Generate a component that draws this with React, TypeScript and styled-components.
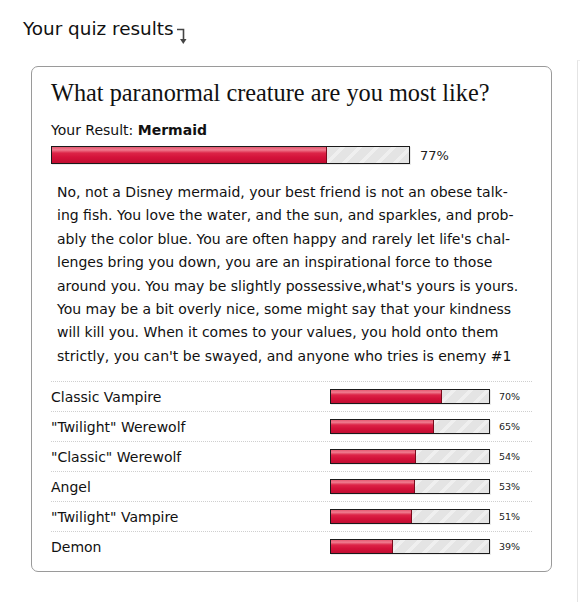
import React from "react";
import styled, { createGlobalStyle } from "styled-components";

const Global = createGlobalStyle`
  html, body { margin: 0; padding: 0; background: #fff; overflow: hidden; }
  body { font-family: "DejaVu Sans", Verdana, sans-serif; color: #111; }
`;

const Page = styled.div`
  display: flex;
  width: 580px;
  height: 602px;
  overflow: hidden;
`;

const MainColumn = styled.div`
  flex: 0 0 552px;
  display: flex;
  flex-direction: column;
`;

const SideColumn = styled.div`
  flex: 0 0 40px;
  margin-left: 25px;
  margin-top: 60px;
  border-left: 1px solid #e4e4e4;
  border-top: 1px solid #eee;
`;

const Header = styled.div`
  display: flex;
  align-items: flex-start;
  padding: 18px 0 0 23px;
  height: 66px;
  box-sizing: border-box;
  font-size: 18.4px;
  line-height: 21px;
  color: #111;
`;

const ArrowIcon = styled.svg`
  margin-top: 10px;
  margin-left: 3px;
`;

const Card = styled.div`
  margin-left: 31px;
  width: 521px;
  box-sizing: border-box;
  border: 1px solid #9a9a9a;
  border-radius: 7px;
  padding: 11px 19px 10px 19px;
  display: flex;
  flex-direction: column;
`;

const Title = styled.h1`
  margin: 0;
  font-family: "Liberation Serif", "Times New Roman", serif;
  font-weight: normal;
  font-size: 24.3px;
  line-height: 30px;
  color: #111;
`;

const ResultLine = styled.div`
  margin-top: 13px;
  font-size: 14px;
  line-height: 18px;
  b { font-weight: bold; }
`;

const BarRow = styled.div`
  display: flex;
  align-items: center;
  gap: 10px;
  margin-top: 7px;
`;

const BarTrack = styled.div<{ $w: number; $h: number }>`
  width: ${(p) => p.$w}px;
  height: ${(p) => p.$h}px;
  box-sizing: border-box;
  border: 1px solid #1a1a1a;
  background-color: #e2e2e2;
  background-image: repeating-linear-gradient(
    -45deg,
    #e4e4e4 0px,
    #e4e4e4 8px,
    #efefef 8px,
    #efefef 12px
  );
  box-shadow: 1px 1px 0 rgba(0, 0, 0, 0.08);
`;

const BarFill = styled.div`
  height: 100%;
  box-sizing: border-box;
  border-right: 1px solid #7a0a1c;
  background: linear-gradient(
    to bottom,
    #e45a72 0%,
    #f07a8e 18%,
    #dc2447 38%,
    #d4123a 65%,
    #c10d31 100%
  );
`;

const Percent = styled.span<{ $small?: boolean }>`
  font-size: ${(p) => (p.$small ? "9.5px" : "13px")};
  padding-left: ${(p) => (p.$small ? "9px" : "0")};
  color: #222;
`;

const Description = styled.div`
  margin-top: 17px;
  padding-left: 6px;
  padding-bottom: 13px;
  font-size: 14px;
  line-height: 23.4px;
  color: #111;
`;

const DescLine = styled.span`
  display: block;
  white-space: nowrap;
`;

const Rows = styled.div`
  display: flex;
  flex-direction: column;
  width: 481px;
`;

const Row = styled.div`
  display: grid;
  grid-template-columns: 279px 160px auto;
  align-items: center;
  height: 30px;
  box-sizing: border-box;
  border-top: 1px dotted #cfcfcf;
  font-size: 14px;
`;

const RowLabel = styled.span`
  padding-top: 1px;
`;

const descLines = [
  "No, not a Disney mermaid, your best friend is not an obese talk-",
  "ing fish. You love the water, and the sun, and sparkles, and prob-",
  "ably the color blue. You are often happy and rarely let life's chal-",
  "lenges bring you down, you are an inspirational force to those",
  "around you. You may be slightly possessive,what's yours is yours.",
  "You may be a bit overly nice, some might say that your kindness",
  "will kill you. When it comes to your values, you hold onto them",
  "strictly, you can't be swayed, and anyone who tries is enemy #1",
];

const others = [
  { name: "Classic Vampire", pct: 70 },
  { name: "\"Twilight\" Werewolf", pct: 65 },
  { name: "\"Classic\" Werewolf", pct: 54 },
  { name: "Angel", pct: 53 },
  { name: "\"Twilight\" Vampire", pct: 51 },
  { name: "Demon", pct: 39 },
];

const Bar: React.FC<{ pct: number; w: number; h: number }> = ({ pct, w, h }) => (
  <BarTrack $w={w} $h={h}>
    <BarFill style={{ width: `${pct}%` }} />
  </BarTrack>
);

export default function App() {
  return (
    <Page>
      <Global />
      <MainColumn>
        <Header>
          <span>Your quiz results</span>
          <ArrowIcon width="10" height="17" viewBox="0 0 10 17">
            <path d="M0 1.5 H6.5 V12" stroke="#444" strokeWidth="1.6" fill="none" />
            <path d="M3 11 L9.5 11 L6.3 16 Z" fill="#444" />
          </ArrowIcon>
        </Header>
        <Card>
          <Title>What paranormal creature are you most like?</Title>
          <ResultLine>
            Your Result: <b>Mermaid</b>
          </ResultLine>
          <BarRow>
            <Bar pct={77} w={359} h={18} />
            <Percent>77%</Percent>
          </BarRow>
          <Description>
            {descLines.map((l, i) => (
              <DescLine key={i}>{l}</DescLine>
            ))}
          </Description>
          <Rows>
            {others.map((o) => (
              <Row key={o.name}>
                <RowLabel>{o.name}</RowLabel>
                <Bar pct={o.pct} w={160} h={15} />
                <Percent $small>{o.pct}%</Percent>
              </Row>
            ))}
          </Rows>
        </Card>
      </MainColumn>
      <SideColumn />
    </Page>
  );
}
